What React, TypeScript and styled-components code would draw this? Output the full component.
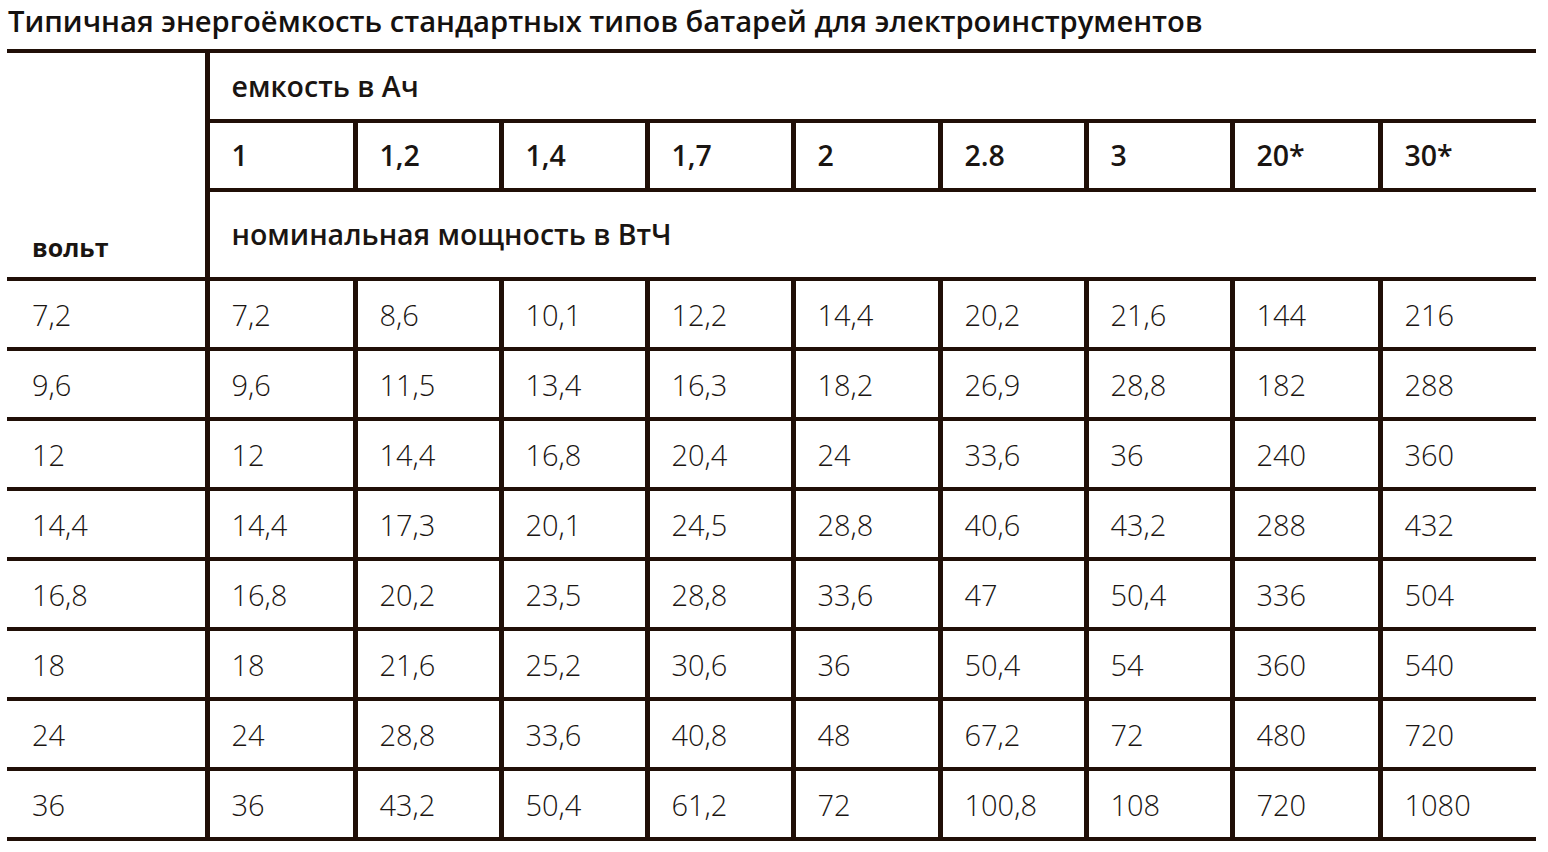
import React from "react";
import styled, { createGlobalStyle } from "styled-components";

const GlobalStyle = createGlobalStyle`
  html, body { margin: 0; padding: 0; background: #ffffff; }
  body { font-family: "Open Sans", "Noto Sans", sans-serif; color: #1a1512; }
`;

const LINE = "#200f07";

const Page = styled.div`
  padding: 4px 0 0 7px;
  width: 1541px;
  box-sizing: border-box;
`;

const Title = styled.h1`
  margin: 0 0 0 1px;
  font-size: 29.2px;
  line-height: 34px;
  font-weight: 600;
  color: #15110f;
  letter-spacing: 0;
  height: 45px;
  white-space: nowrap;
`;

const Table = styled.table`
  border-collapse: collapse;
  table-layout: fixed;
  width: 1529px;
  font-family: "Open Sans", "Noto Sans", sans-serif;
`;

const Row = styled.tr<{ $h: number }>`
  height: ${(p) => p.$h}px;
`;

const Cell = styled.td<{ $weight?: number; $align?: string; $first?: boolean }>`
  border-top: 4px solid ${LINE};
  border-bottom: 4px solid ${LINE};
  border-left: ${(p) => (p.$first ? "none" : `5px solid ${LINE}`)};
  border-right: none;
  padding: 0 0 0 ${(p) => (p.$first ? 25 : 22)}px;
  font-size: ${(p) => (p.$weight && p.$weight >= 600 ? 28.5 : 29)}px;
  font-weight: ${(p) => p.$weight ?? 300};
  color: #1a1512;
  vertical-align: ${(p) => p.$align ?? "middle"};
  white-space: nowrap;
  line-height: 1;
`;

const VoltCell = styled(Cell)`
  font-size: 25px;
  font-weight: 700;
  padding-bottom: 17px;
`;

const widths = [200, 148, 146, 146, 146, 147, 146, 146, 148, 156];
const caps = ["1", "1,2", "1,4", "1,7", "2", "2.8", "3", "20*", "30*"];
const rows: string[][] = [
  ["7,2", "7,2", "8,6", "10,1", "12,2", "14,4", "20,2", "21,6", "144", "216"],
  ["9,6", "9,6", "11,5", "13,4", "16,3", "18,2", "26,9", "28,8", "182", "288"],
  ["12", "12", "14,4", "16,8", "20,4", "24", "33,6", "36", "240", "360"],
  ["14,4", "14,4", "17,3", "20,1", "24,5", "28,8", "40,6", "43,2", "288", "432"],
  ["16,8", "16,8", "20,2", "23,5", "28,8", "33,6", "47", "50,4", "336", "504"],
  ["18", "18", "21,6", "25,2", "30,6", "36", "50,4", "54", "360", "540"],
  ["24", "24", "28,8", "33,6", "40,8", "48", "67,2", "72", "480", "720"],
  ["36", "36", "43,2", "50,4", "61,2", "72", "100,8", "108", "720", "1080"],
];

export default function App() {
  return (
    <>
      <GlobalStyle />
      <Page>
        <Title>Типичная энергоёмкость стандартных типов батарей для электроинструментов</Title>
        <Table>
          <colgroup>
            {widths.map((w, i) => (
              <col key={i} style={{ width: w }} />
            ))}
          </colgroup>
          <tbody>
            <Row $h={70}>
              <VoltCell $first rowSpan={3} $align="bottom">
                вольт
              </VoltCell>
              <Cell colSpan={9} $weight={600}>
                емкость в Ач
              </Cell>
            </Row>
            <Row $h={69}>
              {caps.map((c) => (
                <Cell key={c} $weight={600}>
                  {c}
                </Cell>
              ))}
            </Row>
            <Row $h={89}>
              <Cell colSpan={9} $weight={600}>
                номинальная мощность в ВтЧ
              </Cell>
            </Row>
            {rows.map((r, i) => (
              <Row $h={70} key={i}>
                {r.map((v, j) => (
                  <Cell key={j} $first={j === 0}>
                    {v}
                  </Cell>
                ))}
              </Row>
            ))}
          </tbody>
        </Table>
      </Page>
    </>
  );
}
